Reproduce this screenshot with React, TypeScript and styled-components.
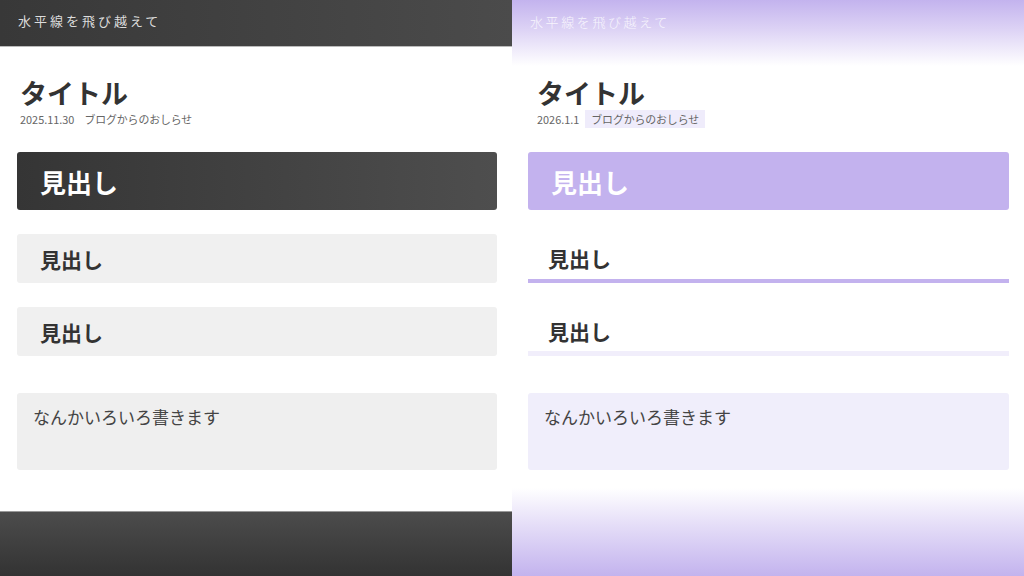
import styled, { createGlobalStyle } from "styled-components";

const GlobalStyle = createGlobalStyle`
  html, body {
    margin: 0;
    padding: 0;
    background: #fff;
  }
  body {
    font-family: "Noto Sans CJK JP", "Noto Sans", sans-serif;
    color: #333;
  }
`;

const StyledPage = styled.div`
  display: grid;
  grid-template-columns: 512px 512px;
  width: 1024px;
  height: 576px;
  overflow: hidden;
`;

const StyledPanel = styled.div`
  display: flex;
  flex-direction: column;
  height: 576px;
  background: #fff;
`;

const StyledHeader = styled.header<{ $theme: "dark" | "lavender" }>`
  display: flex;
  align-items: flex-start;
  box-sizing: border-box;
  height: ${(p) => (p.$theme === "dark" ? "47px" : "66px")};
  padding: ${(p) => (p.$theme === "dark" ? "11px 18px 0" : "12px 18px 0")};
  font-size: 13px;
  line-height: 20px;
  letter-spacing: ${(p) => (p.$theme === "dark" ? "3px" : "2.6px")};
  font-weight: ${(p) => (p.$theme === "dark" ? 400 : 300)};
  color: ${(p) => (p.$theme === "dark" ? "#dcdcdc" : "#f7f5fd")};
  background: ${(p) =>
    p.$theme === "dark"
      ? "linear-gradient(to right, #383838, #4b4b4b)"
      : "linear-gradient(to bottom, #c3b3ee 0%, #ddd3f5 45%, #ffffff 100%)"};
  border-bottom: ${(p) => (p.$theme === "dark" ? "1px solid #bbb" : "none")};
`;

const StyledMain = styled.main<{ $theme: "dark" | "lavender" }>`
  flex: 1;
  display: flex;
  flex-direction: column;
  padding: ${(p) => (p.$theme === "dark" ? "29px 15px 0 17px" : "10px 15px 0 16px")};
`;

const StyledTitleBlock = styled.div<{ $indent: number }>`
  padding-left: ${(p) => p.$indent}px;
`;

const StyledTitle = styled.h1`
  margin: 0;
  font-size: 27px;
  line-height: 34px;
  font-weight: 700;
  color: #333;
`;

const StyledMeta = styled.div`
  display: flex;
  align-items: center;
  height: 18px;
  font-size: 10.9px;
  color: #666;
`;

const StyledDate = styled.span`
  margin-right: 10px;
`;

const StyledTag = styled.span<{ $filled: boolean }>`
  display: inline-flex;
  align-items: center;
  height: 18px;
  padding: 0 ${(p) => (p.$filled ? "6px" : "0")};
  margin-left: ${(p) => (p.$filled ? "-4px" : "0")};
  letter-spacing: -0.1px;
  background: ${(p) => (p.$filled ? "#efecfb" : "transparent")};
`;

const StyledHeadingMain = styled.h2<{ $theme: "dark" | "lavender" }>`
  display: flex;
  align-items: center;
  box-sizing: border-box;
  height: 58px;
  margin: 24px 0 0;
  padding-left: 23px;
  border-radius: 3px;
  font-size: 26px;
  font-weight: 700;
  color: #fff;
  background: ${(p) =>
    p.$theme === "dark"
      ? "linear-gradient(to right, #353535, #4e4e4e)"
      : "#c3b2ee"};
`;

const StyledHeadingSub = styled.h3<{ $variant: "fill" | "strong" | "soft" }>`
  display: flex;
  align-items: center;
  box-sizing: border-box;
  height: 49px;
  margin: 24px 0 0;
  padding-left: ${(p) => (p.$variant === "fill" ? "23px" : "20px")};
  padding-top: ${(p) => (p.$variant === "fill" ? "0" : "3px")};
  border-radius: ${(p) => (p.$variant === "fill" ? "3px" : "0")};
  font-size: 21px;
  font-weight: 700;
  color: #333;
  background: ${(p) => (p.$variant === "fill" ? "#f0f0f0" : "transparent")};
  border-bottom: ${(p) =>
    p.$variant === "strong"
      ? "4px solid #c3b2ee"
      : p.$variant === "soft"
      ? "5px solid #f1eefb"
      : "none"};
`;

const StyledNote = styled.div<{ $theme: "dark" | "lavender" }>`
  box-sizing: border-box;
  height: 77px;
  margin-top: 37px;
  padding: 12px 16px;
  border-radius: 3px;
  font-size: 17px;
  line-height: 24px;
  color: #444;
  background: ${(p) => (p.$theme === "dark" ? "#efefef" : "#f0eefb")};
`;

const StyledFooter = styled.footer<{ $theme: "dark" | "lavender" }>`
  height: ${(p) => (p.$theme === "dark" ? "64px" : "88px")};
  border-top: ${(p) => (p.$theme === "dark" ? "1px solid #999" : "none")};
  background: ${(p) =>
    p.$theme === "dark"
      ? "linear-gradient(to bottom, #4c4c4c, #333333)"
      : "linear-gradient(to bottom, #ffffff 0%, #e6dff8 40%, #c3b3ee 100%)"};
`;

function DarkPanel() {
  return (
    <StyledPanel>
      <StyledHeader $theme="dark">水平線を飛び越えて</StyledHeader>
      <StyledMain $theme="dark">
        <StyledTitleBlock $indent={3}>
          <StyledTitle>タイトル</StyledTitle>
          <StyledMeta>
            <StyledDate>2025.11.30</StyledDate>
            <StyledTag $filled={false}>ブログからのおしらせ</StyledTag>
          </StyledMeta>
        </StyledTitleBlock>
        <StyledHeadingMain $theme="dark">見出し</StyledHeadingMain>
        <StyledHeadingSub $variant="fill">見出し</StyledHeadingSub>
        <StyledHeadingSub $variant="fill">見出し</StyledHeadingSub>
        <StyledNote $theme="dark">なんかいろいろ書きます</StyledNote>
      </StyledMain>
      <StyledFooter $theme="dark" />
    </StyledPanel>
  );
}

function LavenderPanel() {
  return (
    <StyledPanel>
      <StyledHeader $theme="lavender">水平線を飛び越えて</StyledHeader>
      <StyledMain $theme="lavender">
        <StyledTitleBlock $indent={9}>
          <StyledTitle>タイトル</StyledTitle>
          <StyledMeta>
            <StyledDate>2026.1.1</StyledDate>
            <StyledTag $filled={true}>ブログからのおしらせ</StyledTag>
          </StyledMeta>
        </StyledTitleBlock>
        <StyledHeadingMain $theme="lavender">見出し</StyledHeadingMain>
        <StyledHeadingSub $variant="strong">見出し</StyledHeadingSub>
        <StyledHeadingSub $variant="soft">見出し</StyledHeadingSub>
        <StyledNote $theme="lavender">なんかいろいろ書きます</StyledNote>
      </StyledMain>
      <StyledFooter $theme="lavender" />
    </StyledPanel>
  );
}

export default function App() {
  return (
    <>
      <GlobalStyle />
      <StyledPage>
        <DarkPanel />
        <LavenderPanel />
      </StyledPage>
    </>
  );
}
